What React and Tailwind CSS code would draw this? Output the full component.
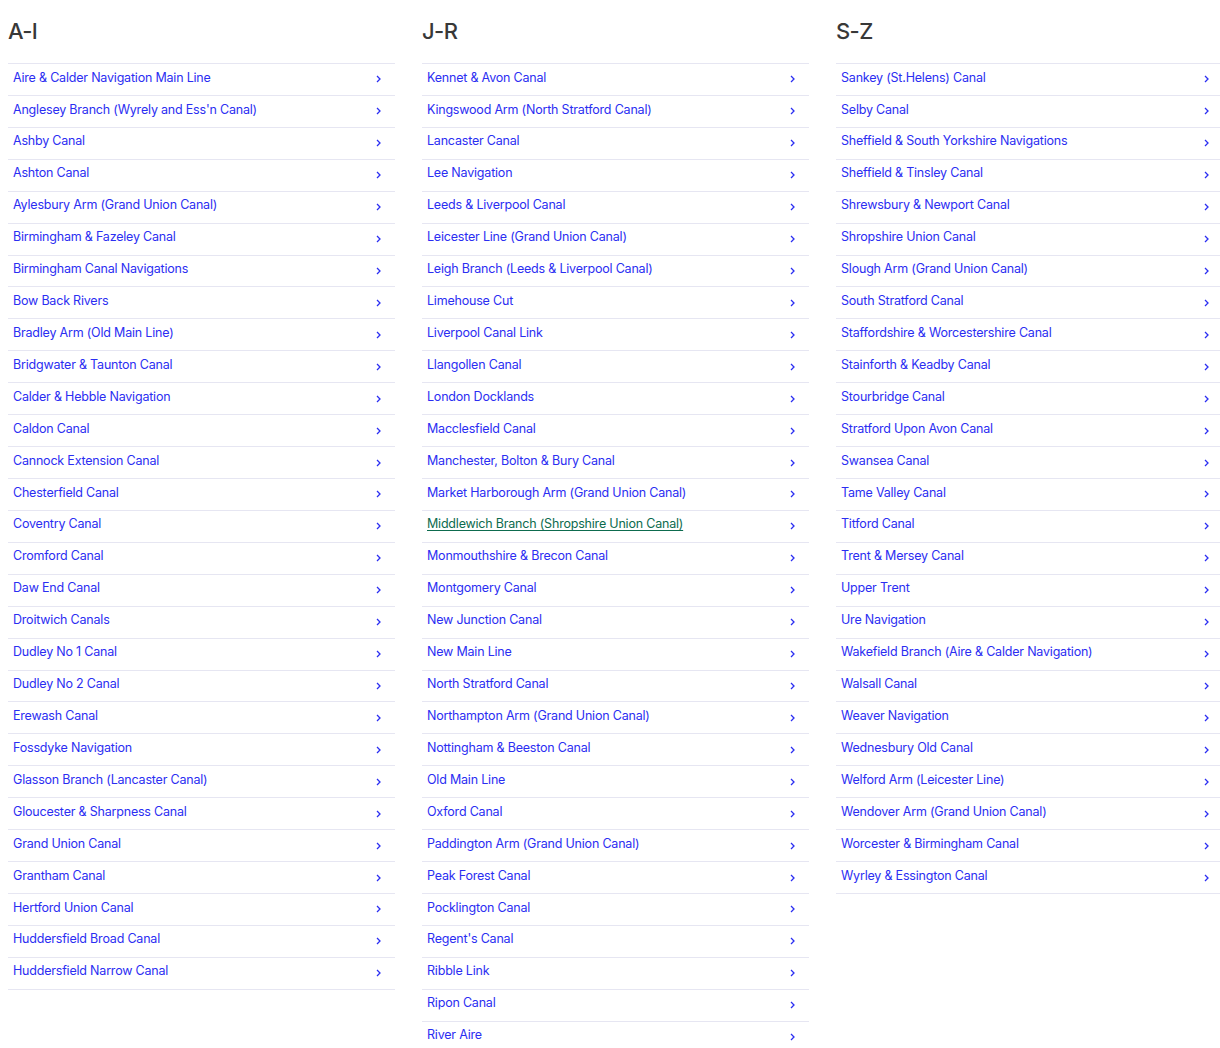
const columns = [
  {
    title: "A-I",
    items: [
      "Aire & Calder Navigation Main Line",
      "Anglesey Branch (Wyrely and Ess'n Canal)",
      "Ashby Canal",
      "Ashton Canal",
      "Aylesbury Arm (Grand Union Canal)",
      "Birmingham & Fazeley Canal",
      "Birmingham Canal Navigations",
      "Bow Back Rivers",
      "Bradley Arm (Old Main Line)",
      "Bridgwater & Taunton Canal",
      "Calder & Hebble Navigation",
      "Caldon Canal",
      "Cannock Extension Canal",
      "Chesterfield Canal",
      "Coventry Canal",
      "Cromford Canal",
      "Daw End Canal",
      "Droitwich Canals",
      "Dudley No 1 Canal",
      "Dudley No 2 Canal",
      "Erewash Canal",
      "Fossdyke Navigation",
      "Glasson Branch (Lancaster Canal)",
      "Gloucester & Sharpness Canal",
      "Grand Union Canal",
      "Grantham Canal",
      "Hertford Union Canal",
      "Huddersfield Broad Canal",
      "Huddersfield Narrow Canal",
    ],
  },
  {
    title: "J-R",
    items: [
      "Kennet & Avon Canal",
      "Kingswood Arm (North Stratford Canal)",
      "Lancaster Canal",
      "Lee Navigation",
      "Leeds & Liverpool Canal",
      "Leicester Line (Grand Union Canal)",
      "Leigh Branch (Leeds & Liverpool Canal)",
      "Limehouse Cut",
      "Liverpool Canal Link",
      "Llangollen Canal",
      "London Docklands",
      "Macclesfield Canal",
      "Manchester, Bolton & Bury Canal",
      "Market Harborough Arm (Grand Union Canal)",
      "Middlewich Branch (Shropshire Union Canal)",
      "Monmouthshire & Brecon Canal",
      "Montgomery Canal",
      "New Junction Canal",
      "New Main Line",
      "North Stratford Canal",
      "Northampton Arm (Grand Union Canal)",
      "Nottingham & Beeston Canal",
      "Old Main Line",
      "Oxford Canal",
      "Paddington Arm (Grand Union Canal)",
      "Peak Forest Canal",
      "Pocklington Canal",
      "Regent's Canal",
      "Ribble Link",
      "Ripon Canal",
      "River Aire",
    ],
  },
  {
    title: "S-Z",
    items: [
      "Sankey (St.Helens) Canal",
      "Selby Canal",
      "Sheffield & South Yorkshire Navigations",
      "Sheffield & Tinsley Canal",
      "Shrewsbury & Newport Canal",
      "Shropshire Union Canal",
      "Slough Arm (Grand Union Canal)",
      "South Stratford Canal",
      "Staffordshire & Worcestershire Canal",
      "Stainforth & Keadby Canal",
      "Stourbridge Canal",
      "Stratford Upon Avon Canal",
      "Swansea Canal",
      "Tame Valley Canal",
      "Titford Canal",
      "Trent & Mersey Canal",
      "Upper Trent",
      "Ure Navigation",
      "Wakefield Branch (Aire & Calder Navigation)",
      "Walsall Canal",
      "Weaver Navigation",
      "Wednesbury Old Canal",
      "Welford Arm (Leicester Line)",
      "Wendover Arm (Grand Union Canal)",
      "Worcester & Birmingham Canal",
      "Wyrley & Essington Canal",
    ],
  },
];

const Chevron = () => (
  <svg width="5" height="8" viewBox="0 0 5 8" className="shrink-0 mt-[3px]">
    <path d="M1 1l3 3-3 3" fill="none" stroke="#2b2ef2" strokeWidth="1.3" />
  </svg>
);

export default function App() {
  return (
    <div className="bg-white h-[1048px] overflow-hidden pl-2 font-['Inter',sans-serif]">
      <div className="flex gap-[27px]">
        {columns.map((col) => (
          <div key={col.title} className="w-[387px] shrink-0">
            <h2 className="h-[63px] pt-[17px] text-[22px] leading-[28px] font-medium text-[#383838] tracking-[-0.6px]">
              {col.title}
            </h2>
            <ul className="border-t border-[#e6e6f2]">
              {col.items.map((item) => {
                const visited = item.startsWith("Middlewich");
                return (
                  <li
                    key={item}
                    className="flex items-center justify-between h-[31.93px] pl-[5px] pr-[14px] pb-[3px] border-b border-[#e6e6f2]"
                  >
                    <a
                      href="#"
                      className={
                        visited
                          ? "text-[12.5px] text-[#0d6b4e] underline underline-offset-2 tracking-[-0.2px]"
                          : "text-[12.5px] text-[#2b2ef2] tracking-[-0.2px]"
                      }
                    >
                      {item}
                    </a>
                    <Chevron />
                  </li>
                );
              })}
            </ul>
          </div>
        ))}
      </div>
    </div>
  );
}
